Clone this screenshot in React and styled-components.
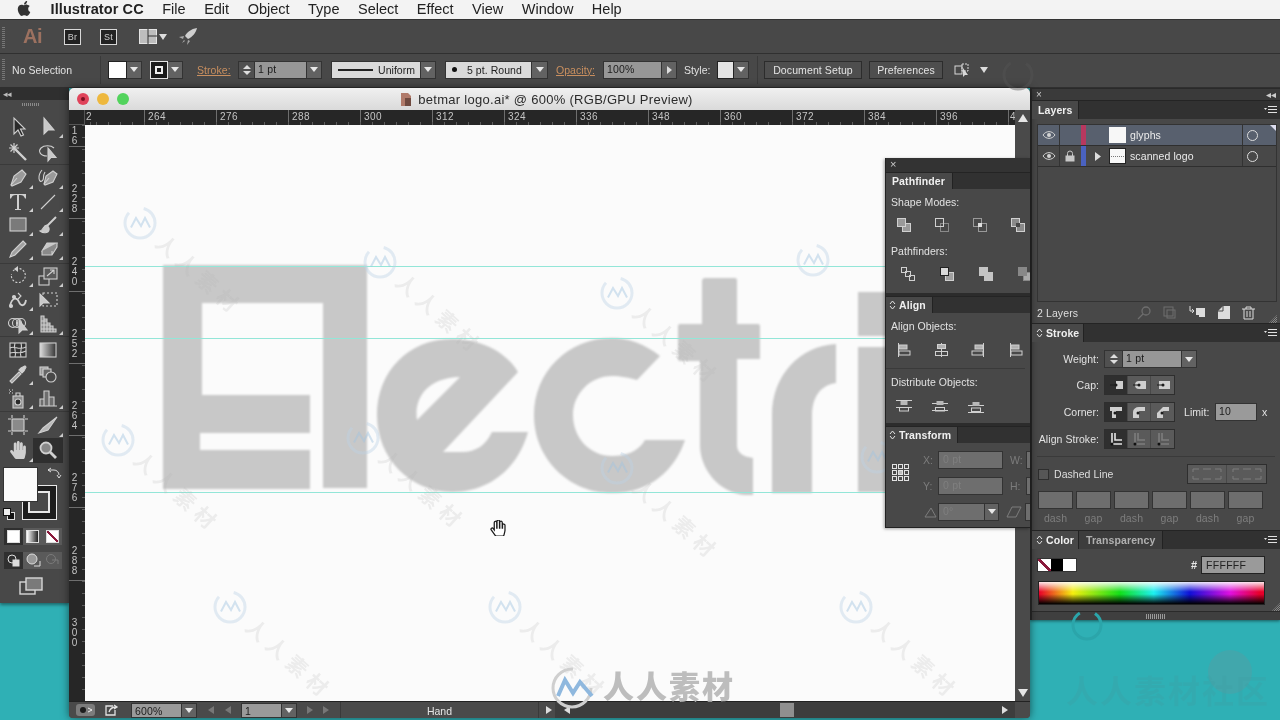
import React from "react";
import styled, { createGlobalStyle } from "styled-components";
import { FaApple, FaHandPaper } from "react-icons/fa";

const UI = `"Liberation Sans", Arial, sans-serif`;
const PANEL = "#484848";

const Global = createGlobalStyle`
  html, body { margin: 0; padding: 0; background: #2fb0b5; overflow: hidden; }
  * { box-sizing: border-box; }
`;

const Screen = styled.div`
  position: relative; width: 1280px; height: 720px; overflow: hidden;
  display: flex; flex-direction: column; background: #2fb0b5;
  font-family: ${UI}; color: #dcdcdc; filter: blur(.3px);
`;

/* ---------- menu bar ---------- */
const MenuBar = styled.div`
  height: 20px; flex: none; display: flex; align-items: center; gap: 18.5px;
  background: #f3f3f3; border-bottom: 1px solid #333; padding-left: 16px;
  color: #222; font-size: 14.5px; line-height: 19px;
`;
const Apple = styled(FaApple)` width: 16px; height: 17px; color: #333; margin: -2px 0 0 0; `;
const AppName = styled.b` letter-spacing: .1px; `;
const MenuItem = styled.span``;

/* ---------- app bar ---------- */
const AppBar = styled.div`
  height: 34px; flex: none; display: flex; align-items: center; position: relative;
  background: #484848; border-bottom: 1px solid #303030; padding-left: 23px;
`;
const Grip = styled.div`
  position: absolute; left: 2px; top: ${p => p.$top}px; width: 3px; height: ${p => p.$h}px;
  background: repeating-linear-gradient(to bottom, #777 0 1px, transparent 1px 2px);
`;
const AiLogo = styled.span` font-size: 20px; font-weight: bold; color: #9c7160; width: 41px; letter-spacing: -.5px; `;
const BadgeBox = styled.span`
  width: 17px; height: 16px; margin-right: ${p => p.$mr}px; border: 1px solid #d8d8d8; background: #222;
  display: flex; align-items: center; justify-content: center; font-size: 9px; color: #ccc; letter-spacing: .3px;
`;
const IconSlot = styled.span`
  display: inline-flex; align-items: center; margin-left: ${p => p.$ml || 0}px; flex: none;
`;

/* ---------- control bar ---------- */
const ControlBar = styled.div`
  height: 34px; flex: none; display: flex; align-items: center; position: relative; padding-bottom: 2px;
  background: #484848; border-bottom: 1px solid #303030; padding-left: 12px; font-size: 10.5px;
`;
const CtrlText = styled.span`
  margin-left: ${p => p.$ml || 0}px; width: ${p => p.$w}px; flex: none; letter-spacing: .05px; white-space: nowrap;
  color: #e2e2e2; font-size: 10.5px;
`;
const LinkLabel = styled(CtrlText)` color: #c98f5f; text-decoration: underline; `;
const VSep = styled.span` width: 1px; height: 28px; background: #3a3a3a; flex: none; margin-left: ${p => p.$ml}px; `;
const Cluster = styled.div` display: flex; height: 18px; flex: none; margin-left: ${p => p.$ml || 0}px; `;
const Swatch = styled.span`
  width: ${p => p.$w}px; height: 100%; flex: none; background: ${p => p.$bg || "#fff"};
  border: 1px solid ${p => p.$line || "#222"}; display: flex; align-items: center; justify-content: center;
`;
const Drop = styled.span`
  width: ${p => p.$w || 15}px; height: 100%; flex: none; background: #626262; border: 1px solid #333; border-left: 0;
  display: flex; align-items: center; justify-content: center;
  &::after { content: ""; border-left: 4px solid transparent; border-right: 4px solid transparent; border-top: 5px solid #e8e8e8; }
`;
const PlayDrop = styled(Drop)`
  &::after { border: 0; border-top: 4px solid transparent; border-bottom: 4px solid transparent; border-left: 5px solid #ddd; }
`;
const Stepper = styled.span`
  width: ${p => p.$w || 16}px; height: 100%; flex: none; background: #505050; border: 1px solid #333; border-right: 0;
  display: flex; flex-direction: column; align-items: center; justify-content: center; gap: 2px;
  &::before { content: ""; border-left: 4px solid transparent; border-right: 4px solid transparent; border-bottom: 4px solid #ddd; }
  &::after { content: ""; border-left: 4px solid transparent; border-right: 4px solid transparent; border-top: 4px solid #ddd; }
`;
const NumInput = styled.span`
  width: ${p => p.$w}px; height: 100%; flex: none; background: ${p => p.$bg || "#979797"}; color: ${p => p.$fg || "#1c1c1c"};
  border: 1px solid #333; font-size: 10.5px; line-height: 15px; padding-left: 3px; letter-spacing: .2px; white-space: nowrap;
`;
const LightBox = styled.span`
  width: ${p => p.$w}px; height: 100%; flex: none; background: #dadada; color: #222; border: 1px solid #333;
  display: flex; align-items: center; gap: 5px; padding: 0 5px 0 6px; font-size: 10.5px; letter-spacing: .05px; white-space: nowrap;
`;
const StrokeLine = styled.span` width: 35px; height: 2px; background: #222; flex: none; `;
const Dot = styled.span` width: 5px; height: 5px; border-radius: 50%; background: #111; margin-right: 5px; flex: none; `;
const FlatButton = styled.span`
  width: ${p => p.$w}px; height: 18px; flex: none; margin-left: ${p => p.$ml}px; background: #4e4e4e; border: 1px solid #2c2c2c;
  display: flex; align-items: center; justify-content: center; font-size: 10.5px; letter-spacing: .1px; color: #e4e4e4; white-space: nowrap;
`;

/* ---------- workspace ---------- */
const Workspace = styled.div` flex: 1; display: flex; align-items: flex-start; min-height: 0; `;

const ToolsPanel = styled.div`
  width: 69px; height: 515px; flex: none; background: #484848; display: flex; flex-direction: column;
  box-shadow: 0 2px 3px rgba(0,0,0,.4); position: relative;
`;
const ToolsHead = styled.div`
  height: 12px; background: #2f2f2f; display: flex; align-items: center; padding-left: 3px;
  font-size: 9px; color: #bbb; line-height: 10px; letter-spacing: -1px;
`;
const ToolsGrip = styled.div`
  height: 3px; width: 18px; margin: 3px auto 0 22px;
  background: repeating-linear-gradient(to right, #8a8a8a 0 1px, transparent 1px 2px);
`;
const ToolGroup = styled.div`
  display: grid; grid-template-columns: 30px 30px; padding: 0 0 0 3px; grid-auto-rows: ${p => p.$row}px;
  padding-top: ${p => p.$pt || 0}px; padding-bottom: ${p => p.$pb ?? 0}px;
  border-bottom: 1px solid ${p => p.$last ? "transparent" : "#3a3a3a"};
`;
const Tool = styled.span`
  position: relative; display: flex; align-items: center; justify-content: center;
  background: ${p => p.$on ? "#2f2f2f" : "transparent"};
  &::after {
    content: ""; position: absolute; right: 0; bottom: 1px; display: ${p => p.$corner ? "block" : "none"};
    border-left: 4px solid transparent; border-bottom: 4px solid #cfcfcf;
  }
`;
const ColorBlock = styled.div` position: relative; height: 61px; margin-top: 3px; flex: none; `;
const FillBig = styled.span`
  position: absolute; left: 3px; top: 0; width: 35px; height: 35px; background: #fbfbfb; border: 1px solid #333; z-index: 2;
`;
const StrokeBig = styled.span`
  position: absolute; left: 22px; top: 18px; width: 35px; height: 35px; background: #1d1d1d; border: 1px solid #e8e8e8;
  display: flex; align-items: center; justify-content: center;
  &::after { content: ""; width: 18px; height: 18px; border: 2px solid #e8e8e8; background: #484848; margin: -1px 0 0 -1px;}
`;
const SwapIcon = styled.svg` position: absolute; left: 46px; top: 0; `;
const DefaultIcon = styled.svg` position: absolute; left: 3px; top: 41px; `;
const ModeRow = styled.div`
  display: flex; height: 17px; margin: ${p => p.$mt}px 0 0 4px; width: 58px; background: #5a5a5a; flex: none;
`;
const ModeCell = styled.span`
  flex: 1; display: flex; align-items: center; justify-content: center; background: ${p => p.$on ? "#2f2f2f" : "transparent"};
`;
const ModeSquare = styled.span`
  width: 13px; height: 13px; border: 1px solid #ddd; background: ${p => p.$bg};
`;
const ScreenMode = styled.span` display: flex; justify-content: center; margin: 8px 7px 0 0; `;

/* ---------- document window ---------- */
const DocWindow = styled.div`
  position: relative; width: 961px; height: 630px; flex: none; display: flex; flex-direction: column;
  border-radius: 5px 5px 4px 4px; box-shadow: 0 0 8px rgba(0,0,0,.55); background: #484848;
`;
const TitleBar = styled.div`
  height: 22px; flex: none; display: flex; align-items: center; position: relative; padding-left: 8px; gap: 8px;
  background: linear-gradient(#f0f0f0, #dadada); border-radius: 5px 5px 0 0; color: #2b2b2b; font-size: 13px;
`;
const Light = styled.span`
  width: 12px; height: 12px; border-radius: 50%; background: ${p => p.$c}; flex: none; display: flex; align-items: center; justify-content: center;
  &::after { content: ""; width: 4px; height: 4px; border-radius: 50%; background: ${p => p.$dot || "transparent"}; }
`;
const TitleText = styled.div`
  flex: 1; display: flex; justify-content: center; align-items: center; gap: 5px; padding-right: 75px; letter-spacing: .28px;
`;
const DocGrid = styled.div`
  flex: 1; min-height: 0; display: grid; grid-template-columns: 16px 930px 15px; grid-template-rows: 15px 576px;
`;
const Corner = styled.div` background: #262626; border-right: 1px solid #555; border-bottom: 1px solid #555; `;
const HRuler = styled.div`
  display: flex; background: #262626; overflow: hidden; position: relative; font-size: 10px; color: #c4c4c4; letter-spacing: .5px;
  &::after {
    content: ""; position: absolute; left: 0; right: 0; bottom: 0; height: 3px;
    background: repeating-linear-gradient(to right, #5c5c5c 0 1px, transparent 1px 12px); background-position: 11px 0;
  }
`;
const HCell = styled.span`
  width: ${p => p.$w || 72}px; flex: none; border-left: ${p => p.$first ? "0" : "1px solid #6e6e6e"}; padding-left: ${p => p.$pl ?? 3}px; line-height: 13px;
`;
const VRuler = styled.div`
  grid-column: 1; display: flex; flex-direction: column; background: #262626; overflow: hidden; position: relative; color: #c4c4c4; font-size: 10px;
  &::after {
    content: ""; position: absolute; top: 0; bottom: 0; right: 0; width: 3px;
    background: repeating-linear-gradient(to bottom, #5c5c5c 0 1px, transparent 1px 12px);
  }
`;
const VCell = styled.span`
  height: ${p => p.$h || 72.3}px; flex: none; border-top: ${p => p.$first ? "0" : "1px solid #6e6e6e"};
  display: flex; flex-direction: column; justify-content: flex-end; padding: 0 0 ${p => p.$first ? 0 : 4}px 2px;
`;
const VLabel = styled.span` width: 7px; word-break: break-all; line-height: 10px; text-align: center; `;
const VScroll = styled.div`
  grid-column: 3; grid-row: 1 / 3; background: #4a4a4a; display: flex; flex-direction: column; justify-content: space-between; align-items: center; padding: 4px 0 4px;
`;
const ArrowUp = styled.span` width: 0; height: 0; border-left: 5px solid transparent; border-right: 5px solid transparent; border-bottom: 8px solid #e6e6e6; `;
const ArrowDown = styled.span` width: 0; height: 0; border-left: 5px solid transparent; border-right: 5px solid transparent; border-top: 8px solid #e6e6e6; `;
const Canvas = styled.div` background: #fbfbfb; overflow: hidden; position: relative; `;
const CanvasArt = styled.svg` display: block; `;
const HandCursor = styled.span` position: absolute; left: 405px; top: 395px; line-height: 0; `;

const StatusBar = styled.div`
  height: 17px; flex: none; display: flex; align-items: center; background: #4a4a4a; border-top: 1px solid #222; border-radius: 0 0 4px 4px;
  font-size: 10.5px; color: #e4e4e4; position: relative;
`;
const StatusCluster = styled.div` display: flex; height: 15px; margin-left: ${p => p.$ml || 0}px; flex: none; `;
const StatusMsg = styled.span`
  width: 199px; height: 100%; flex: none; margin-left: ${p => p.$ml}px; border-left: 1px solid #3a3a3a; border-right: 1px solid #3a3a3a;
  display: flex; align-items: center; justify-content: center; padding-top: 1px;
`;
const GearBtn = styled.span`
  width: 19px; height: 12px; margin-left: 7px; background: #7c7c7c; border-radius: 3px; flex: none; display: flex; align-items: center; justify-content: center;
`;
const Nav = styled.span`
  margin-left: ${p => p.$ml}px; flex: none; width: 0; height: 0; position: relative; z-index: 1;
  border-top: 4px solid transparent; border-bottom: 4px solid transparent;
  ${p => p.$dir === "l" ? `border-right: 6px solid ${p.$c || "#777"};` : `border-left: 6px solid ${p.$c || "#777"};`}
`;
const ScrollTrack = styled.div`
  position: absolute; left: 486px; width: 460px; top: 0; bottom: 0; background: #3d3d3d;
`;
const ScrollThumb = styled.span`
  position: absolute; left: 711px; width: 14px; top: 1px; bottom: 1px; background: #8f8f8f;
`;

/* ---------- floating pathfinder ---------- */
const Floating = styled.div`
  position: absolute; left: 816px; top: 70px; width: 145px; height: 370px; background: ${PANEL}; overflow: hidden;
  border-left: 1px solid #222; border-bottom: 1px solid #222; box-shadow: -1px 1px 3px rgba(0,0,0,.35); font-size: 10.5px; z-index: 3;
  display: flex; flex-direction: column;
`;
const FloatHead = styled.div`
  height: 14px; flex: none; background: #333; color: #ccc; font-size: 11px; line-height: 13px; padding-left: 4px;
`;
const TabRow = styled.div`
  height: ${p => p.$h || 18}px; flex: none; display: flex; background: #313131; border-top: 1px solid #242424; position: relative;
`;
const Tab = styled.span`
  width: ${p => p.$w}px; height: 100%; flex: none; display: flex; align-items: center; padding-left: ${p => p.$pl ?? 6}px; gap: 3px;
  background: ${p => p.$dim ? "#3d3d3d" : PANEL}; color: ${p => p.$dim ? "#b0b0b0" : "#f0f0f0"}; font-weight: bold; font-size: 10.5px; letter-spacing: .1px;
  border-right: 1px solid #222; white-space: nowrap;
`;
const Diamond = styled.svg` flex: none; `;
const SectionBody = styled.div`
  height: ${p => p.$h}px; flex: none; padding: ${p => p.$pt || 0}px 0 0 5px; overflow: hidden;
`;
const SectionLabel = styled.div`
  height: 14px; line-height: 14px; letter-spacing: .05px; color: #e2e2e2; margin-top: ${p => p.$mt || 0}px; font-size: 10.5px;
`;
const IconRow = styled.div`
  display: flex; margin: ${p => p.$mt}px 0 0 ${p => p.$ml || 0}px; height: 16px; width: 200px;
`;
const IconCell = styled.span` width: ${p => p.$w}px; flex: none; display: flex; justify-content: center; `;
const SectionRule = styled.div` height: 1px; background: #3a3a3a; margin: 10px 5px 0 -5px; `;
const SectionGap = styled.div` height: 3px; flex: none; background: #2c2c2c; `;
const TransformWrap = styled.div` display: flex; padding: 8px 0 0 5px; height: 84px; `;
const RefGrid = styled.svg` margin-top: 12px; flex: none; `;
const TransformRows = styled.div` display: flex; flex-direction: column; gap: 8.5px; margin-left: 13px; `;
const TransformRow = styled.div` display: flex; height: 17.5px; align-items: center; `;
const DimLabel = styled.span` width: ${p => p.$w}px; flex: none; color: #7c7c7c; font-size: 10.5px; margin-left: ${p => p.$ml || 0}px; `;
const DimInput = styled.span`
  width: ${p => p.$w}px; height: 100%; flex: none; background: #6e6e6e; border: 1px solid #333; color: #7f7f7f; line-height: 15px;
  padding-left: 4px; margin-left: ${p => p.$ml || 0}px; letter-spacing: .2px; overflow: hidden;
`;

/* ---------- dock ---------- */
const Dock = styled.div`
  width: 250px; height: 532px; flex: none; display: flex; flex-direction: column; background: ${PANEL};
  border-left: 2px solid #2a2a2a; box-shadow: 0 1px 3px rgba(0,0,0,.5); font-size: 10.5px;
`;
const DockHead = styled.div`
  height: 12px; flex: none; background: #3a3a3a; display: flex; align-items: center; justify-content: space-between; padding: 0 4px 0 4px;
  font-size: 10px; color: #ccc; line-height: 10px; border-top: 1px solid #2a2a2a;
`;
const MenuGlyph = styled.svg` position: absolute; right: 3px; top: 4px; `;
const LayersBody = styled.div` height: 204px; flex: none; padding: 5px 3px 0 5px; display: flex; flex-direction: column; position: relative; `;
const LayersList = styled.div` height: 178px; border: 1px solid #333; flex: none; `;
const LayerRow = styled.div`
  height: 21px; display: grid; grid-template-columns: 22px 20px 7px 22px 17px 1fr 34px; align-items: center; position: relative;
  background: ${p => p.$on ? "#58606e" : "transparent"}; border-bottom: 1px solid #2f2f2f;
`;
const LayerCell = styled.span`
  height: 100%; display: flex; align-items: center; justify-content: center;
  border-right: ${p => p.$line ? "1px solid #333" : "0"};
`;
const LayerBar = styled.span` width: 5px; height: 100%; background: ${p => p.$c}; justify-self: center; `;
const Thumb = styled.span`
  width: 17px; height: 16px; background: #f7f7f7; border: 1px solid ${p => p.$line || "#f7f7f7"}; position: relative; display: block;
  &::after { content: ""; display: ${p => p.$scan ? "block" : "none"}; position: absolute; left: 1px; right: 1px; top: 7px; height: 0; border-top: 1px dotted #777; }
`;
const LayerName = styled.span` padding-left: 4px; color: #ececec; letter-spacing: .1px; `;
const TargetCell = styled.span`
  height: 100%; border-left: 1px solid #333; display: flex; align-items: center; justify-content: flex-start; padding-left: 4px;
  &::after { content: ""; width: 9px; height: 9px; border: 1px solid #ddd; border-radius: 50%; }
`;
const SelCorner = styled.span`
  position: absolute; right: 0; top: 0; border-left: 6px solid transparent; border-top: 6px solid #dde;
`;
const LayersFoot = styled.div` flex: 1; display: flex; align-items: center; position: relative; letter-spacing: .1px; color: #dedede; `;
const FootIcons = styled.div`
  position: absolute; left: 100px; top: 3px; display: flex; gap: 10px; 
`;
const GripCorner = styled.span`
  position: absolute; right: 0; bottom: 0; width: 8px; height: 8px;
  background: repeating-conic-gradient(#888 0 25%, transparent 0 50%) 0 0 / 2px 2px;
  clip-path: polygon(100% 0, 100% 100%, 0 100%);
`;
const StrokeBody = styled.div` height: 188px; flex: none; padding-top: 8px; display: flex; flex-direction: column; `;
const StrokeRow = styled.div`
  display: flex; height: ${p => p.$h || 20}px; align-items: center; margin-bottom: 7px; flex: none;
`;
const StrokeLabel = styled.span` width: 67px; text-align: right; flex: none; margin-right: 5px; color: #e2e2e2; letter-spacing: .05px; white-space: nowrap; `;
const Seg = styled.div` display: flex; height: 20px; border: 1px solid #2e2e2e; flex: none; `;
const SegCell = styled.span`
  width: ${p => p.$w || 23}px; flex: none; display: flex; align-items: center; justify-content: center;
  background: ${p => p.$on ? "#2f2f2f" : "#5a5a5a"}; border-right: 1px solid #484848;
  &:last-child { border-right: 0; }
`;
const Divider = styled.div` height: 1px; background: #3a3a3a; margin: 0 5px 0 5px; flex: none; `;
const DashRow = styled.div` display: flex; align-items: center; height: 20px; margin: 7px 0 0 6px; flex: none; `;
const CheckBox = styled.span` width: 11px; height: 11px; background: #565656; border: 1px solid #2e2e2e; flex: none; margin-right: 5px; `;
const DashLabel = styled.span` width: 133px; flex: none; letter-spacing: .05px; color: #dedede; `;
const DashGrid = styled.div`
  display: grid; grid-template-columns: repeat(6, 38px); margin: 7px 0 0 6px; row-gap: 3px; justify-items: start;
`;
const DashInput = styled.span` width: 35px; height: 18px; background: #6e6e6e; border: 1px solid #333; `;
const DashCaption = styled.span` width: 35px; text-align: center; color: #7e7e7e; font-size: 10.5px; letter-spacing: .1px; line-height: 13px; `;
const ColorBody = styled.div` height: 62px; flex: none; padding: 7px 15px 0 5px; position: relative; `;
const ColorTop = styled.div` display: flex; align-items: center; height: 18px; `;
const MiniSwatches = styled.div` display: flex; height: 14px; width: 40px; flex: none; border: 1px solid #333; `;
const MiniCell = styled.span` flex: 1; background: ${p => p.$bg}; `;
const Hash = styled.span` margin-left: 114px; width: 10px; color: #e8e8e8; font-size: 11px; font-weight: bold; flex: none; `;
const HexInput = styled.span`
  width: 64px; height: 18px; flex: none; background: #9a9a9a; border: 1px solid #222; color: #222; padding-left: 4px; line-height: 16px; letter-spacing: .3px;
`;
const Spectrum = styled.div`
  height: 24px; margin: 7px 0 0 1px; border: 1px solid #222;
  background:
    linear-gradient(to bottom, rgba(255,255,255,.9) 0%, rgba(255,255,255,0) 45%, rgba(0,0,0,0) 55%, #000 100%),
    linear-gradient(to right, #e8002a 0%, #f5ee10 15%, #12e01a 36%, #1ef0f0 51%, #1010d8 67%, #e010e0 85%, #e8002a 98%);
`;
const DockFoot = styled.div`
  height: 9px; flex: none; background: #3f3f3f; border-top: 1px solid #2a2a2a; display: flex; justify-content: center; align-items: center;
  &::after { content: ""; width: 20px; height: 5px; background: repeating-linear-gradient(to right, #999 0 1px, transparent 1px 2px); }
`;

/* ---------- overlay watermark ---------- */
const Overlay = styled.svg` position: absolute; left: 0; top: 0; pointer-events: none; z-index: 10; `;
const CJK = `"Noto Sans CJK SC", sans-serif`;

/* ---------- icons ---------- */
const S = "#d0d0d0";
const I = ({ children, s = 22 }) => <svg width={s} height={s} viewBox="0 0 22 22" fill="none" stroke={S} strokeWidth="1.1">{children}</svg>;
const tools = {
  select: <I><path d="M7 2v16l4-4 3 6 2.500-1-3-6H18Z" fill="#2a2a2a" /></I>,
  direct: <I><path d="M7 2v16l4-4h6Z" fill="#c8c8c8" /></I>,
  wand: <I><path d="M8 8l11 11" strokeWidth="2.400" /><path d="M7 2v10M2 7h10M3.500 3.500l7 7M10.500 3.500l-7 7" strokeWidth="1.200" /></I>,
  lasso: <I><path d="M10 15C3 15 1 10 4 7c3-3 10-3 13 0" /><path d="M11 7v13l3-3.500h5Z" fill="#c8c8c8" /></I>,
  pen: <I><path d="M15 3l4 4-5 8-9 4-1-1 3-9Z" fill="#9a9a9a" /><path d="M4 18l6-7" /></I>,
  curv: <I><path d="M16 4l4 3-4 8-8 3-1-1 2-8Z" fill="#9a9a9a" /><path d="M7 17l5-6M5 3C0 9 2 16 5 14s0-4 3-9" /></I>,
  type: <I><path d="M3 3h16v4.500h-1C17 5 16 4 13 4h-1v14h2v1H8v-1h2V4H9C6 4 5 5 4 7.500H3Z" fill="#d0d0d0" stroke="none" /></I>,
  line: <I><path d="M4 18L18 4" /></I>,
  rect: <I><rect x="3" y="4" width="16" height="13" fill="#7a7a7a" /></I>,
  brush: <I><path d="M19 3L10 12" strokeWidth="2" /><path d="M10 11c-4 0-3 5-7 6 4 3 10 2 9-3Z" fill="#c8c8c8" /></I>,
  pencil: <I><path d="M16 3l3 3L8 17l-5 2 2-5Z" fill="#a0a0a0" /></I>,
  eraser: <I><path d="M10 5h10l-5 8H5Z" fill="#c8c8c8" /><path d="M5 13v4h10l5-8v-4M15 13v4" fill="#8a8a8a" /></I>,
  rotate: <I><path d="M6 6a7 7 0 1 1-1.500 3" strokeDasharray="2 1.600" /><path d="M11 1v6L7 4Z" fill="#d0d0d0" stroke="none" /></I>,
  scale: <I><rect x="2" y="11" width="10" height="9" /><rect x="7" y="3" width="13" height="11" fill="#5a5a5a" /><path d="M10 11l7-6M13 5h4v4" /></I>,
  width: <I><path d="M3 17C5 8 10 8 12 13s6 4 7-2" strokeWidth="1.800" /><circle cx="7" cy="8" r="1.500" fill="#d0d0d0" /><circle cx="4" cy="17" r="1.500" fill="#d0d0d0" /><path d="M11 4l3 3-3 3" /></I>,
  free: <I><rect x="6" y="4" width="14" height="13" strokeDasharray="2 2" /><path d="M3 5v12l3-3h6Z" fill="#c8c8c8" /></I>,
  builder: <I><circle cx="6" cy="10" r="4.500" /><circle cx="10" cy="10" r="4.500" /><circle cx="14" cy="10" r="4.500" /><path d="M12 7v13l3-3h5Z" fill="#c8c8c8" /></I>,
  persp: <I><path d="M4 3h3v16H4zM7 6h3v13H7zM10 10h3v9h-3zM13 13h3v6h-3zM16 16h3v3h-3zM4 8h6M4 12h9M4 16h15" fill="#8a8a8a" /></I>,
  mesh: <I><rect x="3" y="4" width="16" height="14" fill="#333" /><path d="M3 9c5-3 8 3 16-1M3 14c5-2 8 2 16-2M8 4c-2 5 2 9 0 14M14 4c2 5-2 9 0 14" /></I>,
  gradient: <I><defs><linearGradient id="gt"><stop offset="0" stopColor="#ddd" /><stop offset="1" stopColor="#333" /></linearGradient></defs><rect x="3" y="4" width="16" height="14" fill="url(#gt)" /></I>,
  dropper: <I><path d="M5 20l-2-2 9-9 2 2Z" fill="#a0a0a0" /><path d="M12 7l3 3 2-2 2-4-1-1-4 2Z" fill="#d0d0d0" /></I>,
  blend: <I><rect x="3" y="4" width="8" height="8" fill="#999" /><rect x="6" y="6" width="8" height="8" fill="#666" /><circle cx="14" cy="14" r="5" fill="#484848" /></I>,
  spray: <I><rect x="6" y="9" width="10" height="12" fill="#8a8a8a" /><path d="M9 9V6h4v3" /><circle cx="11" cy="15" r="3" fill="#2a2a2a" /><path d="M2 3h1M5 3h1M2 6h1M5 6h1M3 4.500h1" /></I>,
  graph: <I><path d="M3 19V12h4v7M7 19V4h5v15M12 19v-9h5v9M2 19h18" fill="#6e6e6e" /></I>,
  artboard: <I><rect x="5" y="5" width="12" height="12" fill="#8a8a8a" /><path d="M5 1v3M17 1v3M5 18v3M17 18v3M1 5h3M1 17h3M18 5h3M18 17h3" /></I>,
  slice: <I><path d="M20 3L6 14l-4 5 9-3Z" fill="#b8b8b8" /></I>,
  zoom: <I><circle cx="9" cy="9" r="5.500" fill="#888" strokeWidth="1.800" /><path d="M13 13l6 6" strokeWidth="2.800" /></I>
};

const Sq = ({ aFill = "none", bFill = "none", aLine = S, bLine = S, extra }) => (
  <svg width="16" height="16" viewBox="0 0 16 16" fill="none" strokeWidth="1">
    <rect x="6.500" y="6.500" width="8" height="8" stroke={bLine} fill={bFill} />
    <rect x="1.500" y="1.500" width="8" height="8" stroke={aLine} fill={aFill} />
    {extra}
  </svg>
);
const Align = ({ v }) => (
  <svg width="16" height="16" viewBox="0 0 16 16" stroke={S} fill="#b0b0b0">
    {v === "l" && <><path d="M2.500 1v14" /><rect x="3" y="3" width="8" height="4" /><rect x="3" y="9" width="11" height="4" fill="none" /></>}
    {v === "c" && <><path d="M8.500 1v14" /><rect x="4.500" y="2.500" width="8" height="4" /><rect x="2.500" y="9.500" width="12" height="4" fill="none" /></>}
    {v === "r" && <><path d="M13.500 1v14" /><rect x="5" y="3" width="8" height="4" /><rect x="2" y="9" width="11" height="4" fill="none" /></>}
  </svg>
);
const Dist = ({ v }) => {
  const y = v === 0 ? [3, 9] : v === 1 ? [6, 12] : [8, 14];
  return (
    <svg width="18" height="16" viewBox="0 0 18 16" stroke={S}>
      <path d={`M1 ${y[0] - 0.5}h16M1 ${y[1] + 0.5}h16`} />
      <rect x="5.500" y={v === 2 ? 4 : 3} width="7" height="4" fill="#b8b8b8" stroke="none" />
      <rect x="4.500" y={v === 2 ? 10 : 9.5} width="9" height="3.500" fill="none" />
    </svg>
  );
};
const Eye = () => (
  <svg width="14" height="10" viewBox="0 0 14 10" fill="none" stroke="#d4d4d4">
    <path d="M1 5c3-4.500 9-4.500 12 0-3 4.500-9 4.500-12 0Z" /><circle cx="7" cy="5" r="2" fill="#d4d4d4" stroke="none" />
  </svg>
);
const Lock = () => (
  <svg width="10" height="12" viewBox="0 0 10 12" fill="none" stroke="#c8c8c8"><path d="M2.500 6V3.500a2.500 2.500 0 0 1 5 0V6" /><rect x="1" y="6" width="8" height="5" fill="#c8c8c8" /></svg>
);
const Menu = () => (
  <MenuGlyph width="13" height="9" viewBox="0 0 13 9" stroke="#e2e2e2">
    <path d="M4 1.500h9M4 4.500h9M4 7.500h9" /><path d="M0 3h3L1.500 5Z" fill="#e2e2e2" stroke="none" />
  </MenuGlyph>
);
const Dia = () => (
  <Diamond width="7" height="10" viewBox="0 0 7 10" fill="none" stroke="#e4e4e4"><path d="M1 4l2.500-3L6 4M1 6l2.500 3L6 6" /></Diamond>
);

const Cap = ({ v }) => (
  <svg width="14" height="14" viewBox="0 0 14 14">
    <path d={v === 0 ? "M7 3h7v8H7Z" : v === 1 ? "M14 3H7a4 4 0 0 0 0 8h7Z" : "M14 3H3v8h11Z"} fill="#cfcfcf" />
    <path d="M1 7h7" stroke="#1c1c1c" /><circle cx="7" cy="7" r="1.500" fill="#1c1c1c" />
  </svg>
);
const Join = ({ v }) => (
  <svg width="14" height="14" viewBox="0 0 14 14">
    <path d={v === 0 ? "M1 2h12v4H7v7H3V6H1Z" : v === 1 ? "M1 13V7a6 5 0 0 1 6-5h6v4H7v7Z" : "M1 13V8l6-6h6v4H7v7Z"} fill="#cfcfcf" />
    <circle cx="6" cy="8" r="1.500" fill="#1c1c1c" />
  </svg>
);
const AlignStroke = ({ v }) => (
  <svg width="14" height="14" viewBox="0 0 14 14" fill="none" stroke={v === 0 ? "#e4e4e4" : "#7d7d7d"} strokeWidth="1.600">
    <path d="M3 1v11h10" /><path d="M6 1v7h7" /><circle cx="3" cy="12" r="1.500" fill="#111" stroke="none" />
  </svg>
);
const DashIcon = () => (
  <svg width="30" height="12" viewBox="0 0 30 12" fill="none" stroke="#7d7d7d"><path d="M1 4V1h6M11 1h8M23 1h6v3M1 8v3h6M11 11h8M23 11h6V8" /></svg>
);

const Mark = ({ x, y, noText }) => (
  <g transform={`translate(${x} ${y})`}>
    <circle r="15" fill="none" stroke="#bcd3e6" strokeOpacity=".4" strokeWidth="3" strokeDasharray="58 16" />
    <path d="M-9 4.500L-4 -5L1 3L5 -5L10 4.500" fill="none" stroke="#9fc4e0" strokeOpacity=".45" strokeWidth="2" />
    {!noText && (
      <text transform="rotate(42) translate(25 7)" fontFamily={CJK} fontSize="21" letterSpacing="6" fill="#b5b5b5" fillOpacity=".2" fontWeight="700">人人素材</text>
    )}
  </g>
);

const Art = () => (
  <CanvasArt width="930" height="576" viewBox="85 125 930 576">
    <defs><filter id="soft"><feGaussianBlur stdDeviation="0.8" /></filter></defs>
    <g fill="#c8c8c8" fillRule="evenodd" filter="url(#soft)">
      <path d="M163 265H367V488H323V303H202V395H310V433H200V450H310V489H163Z" />
      <path d="M518 372C505 350 478 339 452 339C408 339 377 372 377 415C377 458 410 492 452 492C490 492 518 468 528 432H492C486 445 476 452 462 452H443ZM417 420C414 400 425 378 460 377Z" />
      <path d="M660 356C645 344 628 338 612 338C568 338 534 372 534 415C534 460 570 493 612 493C650 493 675 470 685 440H645C638 452 626 456 612 456C590 456 573 438 573 415C573 394 590 376 612 376C620 376 630 378 637 380Z" />
      <path d="M704 278H735Q737 278 737 280V324H758Q760 324 760 326V359H737V445Q737 456 753 458V495H745C720 493 700 470 700 445V361H680Q678 361 678 359V326Q678 324 680 324H702V280Z" />
      <path d="M836 344V383C820 385 812 398 812 415V493H772V415C772 375 800 346 836 344Z" />
      <rect x="858" y="292" width="44" height="44" /><rect x="858" y="347" width="44" height="145" />
    </g>
    <path d="M85 266.500H885M85 338.500H885M85 492.500H885" stroke="#93e6d8" strokeWidth="1" />
    {[[140, 223], [380, 262], [617, 293], [118, 440], [363, 438], [617, 468], [230, 607], [505, 607], [856, 607]].map(([x, y]) => <Mark key={x + "" + y} x={x} y={y} />)}
    <Mark x={813} y={260} noText /><Mark x={877} y={457} noText />
  </CanvasArt>
);

const hLabels = ["264", "276", "288", "300", "312", "324", "336", "348", "360", "372", "384", "396"];
const vLabels = ["228", "240", "252", "264", "276", "288", "300"];

export default function App() {
  return (
    <Screen>
      <Global />
      <MenuBar>
        <Apple />
        <AppName>Illustrator CC</AppName>
        {["File", "Edit", "Object", "Type", "Select", "Effect", "View", "Window", "Help"].map(m => <MenuItem key={m}>{m}</MenuItem>)}
      </MenuBar>

      <AppBar>
        <Grip $top={7} $h={22} />
        <AiLogo>Ai</AiLogo>
        <BadgeBox $mr={19}>Br</BadgeBox>
        <BadgeBox $mr={22}>St</BadgeBox>
        <svg width="18" height="15" viewBox="0 0 18 15"><rect x=".5" y=".5" width="17" height="14" fill="#bdbdbd" stroke="#e4e4e4" /><path d="M9 0v15M9 7h9" stroke="#333" /></svg>
        <IconSlot $ml={2}><svg width="8" height="6"><path d="M0 0h8L4 6Z" fill="#ddd" /></svg></IconSlot>
        <IconSlot $ml={11}>
          <svg width="20" height="20" viewBox="0 0 20 20"><path d="M19 1C13 2 9 5 7 9l3 3c4-2 8-6 9-11Z" fill="#cfcfcf" /><path d="M6 9L1 10l4 2ZM10 13l-1 5 3-4ZM6 13l-2 3 3-2Z" fill="#aaa" /></svg>
        </IconSlot>
      </AppBar>

      <ControlBar>
        <Grip $top={5} $h={22} />
        <CtrlText $w={60}>No Selection</CtrlText>
        <VSep $ml={28} />
        <Cluster $ml={7}><Swatch $w={19} /><Drop /></Cluster>
        <Cluster $ml={8}>
          <Swatch $w={18} $bg="#1a1a1a" $line="#e4e4e4"><svg width="8" height="8"><rect x="1" y="1" width="6" height="6" fill="none" stroke="#eee" strokeWidth="2" /></svg></Swatch>
          <Drop />
        </Cluster>
        <LinkLabel $ml={14} $w={41}>Stroke:</LinkLabel>
        <Cluster><Stepper /><NumInput $w={53}>1 pt</NumInput><Drop /></Cluster>
        <Cluster $ml={9}><LightBox $w={90}><StrokeLine />Uniform</LightBox><Drop /></Cluster>
        <Cluster $ml={9}><LightBox $w={87}><Dot />5 pt. Round</LightBox><Drop $w={16} /></Cluster>
        <LinkLabel $ml={8} $w={47}>Opacity:</LinkLabel>
        <Cluster><NumInput $w={59}>100%</NumInput><PlayDrop /></Cluster>
        <CtrlText $ml={7} $w={33}>Style:</CtrlText>
        <Cluster><Swatch $w={17} $bg="#e4e4e4" /><Drop /></Cluster>
        <VSep $ml={8} />
        <FlatButton $ml={6} $w={98}>Document Setup</FlatButton>
        <FlatButton $ml={7} $w={74}>Preferences</FlatButton>
        <IconSlot $ml={11}>
          <svg width="16" height="14" viewBox="0 0 16 14" fill="none" stroke="#d8d8d8"><rect x="1" y="3" width="7" height="8" /><rect x="8" y="1" width="6" height="7" strokeDasharray="2 1" /><path d="M9 5v9l2-2 3 0Z" fill="#d8d8d8" stroke="none" /></svg>
        </IconSlot>
        <IconSlot $ml={10}><svg width="8" height="6"><path d="M0 0h8L4 6Z" fill="#ddd" /></svg></IconSlot>
      </ControlBar>

      <Workspace>
        <ToolsPanel>
          <ToolsHead>◂◂</ToolsHead>
          <ToolsGrip />
          <ToolGroup $pt={8} $row={25}>
            <Tool>{tools.select}</Tool><Tool $corner>{tools.direct}</Tool>
            <Tool>{tools.wand}</Tool><Tool>{tools.lasso}</Tool>
          </ToolGroup>
          <ToolGroup $pt={1} $pb={2} $row={23.7}>
            <Tool $corner>{tools.pen}</Tool><Tool $corner>{tools.curv}</Tool>
            <Tool $corner>{tools.type}</Tool><Tool $corner>{tools.line}</Tool>
            <Tool $corner>{tools.rect}</Tool><Tool $corner>{tools.brush}</Tool>
            <Tool $corner>{tools.pencil}</Tool><Tool $corner>{tools.eraser}</Tool>
          </ToolGroup>
          <ToolGroup $row={24}>
            <Tool $corner>{tools.rotate}</Tool><Tool $corner>{tools.scale}</Tool>
            <Tool $corner>{tools.width}</Tool><Tool>{tools.free}</Tool>
            <Tool $corner>{tools.builder}</Tool><Tool $corner>{tools.persp}</Tool>
          </ToolGroup>
          <ToolGroup $pt={1} $pb={1} $row={24}>
            <Tool>{tools.mesh}</Tool><Tool>{tools.gradient}</Tool>
            <Tool $corner>{tools.dropper}</Tool><Tool>{tools.blend}</Tool>
            <Tool $corner>{tools.spray}</Tool><Tool $corner>{tools.graph}</Tool>
          </ToolGroup>
          <ToolGroup $pt={1} $row={25} $last>
            <Tool>{tools.artboard}</Tool><Tool $corner>{tools.slice}</Tool>
            <Tool $corner><FaHandPaper size={18} color="#cfcfcf" /></Tool><Tool $on>{tools.zoom}</Tool>
          </ToolGroup>
          <ColorBlock>
            <FillBig /><StrokeBig />
            <SwapIcon width="16" height="12" viewBox="0 0 16 12" fill="none" stroke="#ddd"><path d="M2 3h6a5 5 0 0 1 5 5M2 3l3-2M2 3l3 2M13 11l-2-3M13 11l2-3" /></SwapIcon>
            <DefaultIcon width="12" height="12" viewBox="0 0 12 12" fill="#111" stroke="#ddd"><rect x="4.500" y="4.500" width="7" height="7" /><rect x=".5" y=".5" width="7" height="7" fill="#eee" stroke="#111" /></DefaultIcon>
          </ColorBlock>
          <ModeRow $mt={0}>
            <ModeCell $on><ModeSquare $bg="#fff" /></ModeCell>
            <ModeCell><ModeSquare $bg="linear-gradient(to right,#fff,#222)" /></ModeCell>
            <ModeCell><ModeSquare $bg="linear-gradient(to top right,#fff 44%,#8b1a3c 44% 56%,#fff 56%)" /></ModeCell>
          </ModeRow>
          <ModeRow $mt={7}>
            <ModeCell $on><svg width="16" height="14" viewBox="0 0 16 14" fill="none" stroke="#ddd"><circle cx="6" cy="6" r="4" /><rect x="7" y="7" width="6" height="6" fill="#ddd" /></svg></ModeCell>
            <ModeCell><svg width="16" height="14" viewBox="0 0 16 14" fill="none" stroke="#ddd"><circle cx="7" cy="6" r="5" fill="#999" /><path d="M9 13h6V8" /></svg></ModeCell>
            <ModeCell><svg width="16" height="14" viewBox="0 0 16 14" fill="none" stroke="#7a7a7a"><circle cx="7" cy="6" r="4.500" /><path d="M8 7h6v4" /></svg></ModeCell>
          </ModeRow>
          <ScreenMode>
            <svg width="24" height="19" viewBox="0 0 24 19" fill="none" stroke="#d8d8d8"><rect x="1" y="5" width="15" height="12" fill="#484848" strokeWidth="1.400" /><rect x="7" y="1" width="16" height="12" fill="#7a7a7a" strokeWidth="1.400" /></svg>
          </ScreenMode>
        </ToolsPanel>

        <DocWindow>
          <TitleBar>
            <Light $c="#e0435a" $dot="#7b1022" />
            <Light $c="#eeb83e" />
            <Light $c="#52d35c" />
            <TitleText>
              <svg width="14" height="15" viewBox="0 0 14 15"><path d="M2 1h7l3 3v10H2Z" fill="#b07a6a" /><path d="M6 14V6h6v8Z" fill="#6f4a40" /></svg>
              betmar logo.ai* @ 600% (RGB/GPU Preview)
            </TitleText>
          </TitleBar>
          <DocGrid>
            <Corner />
            <HRuler>
              <HCell $first $pl={1} $w={59}>2</HCell>
              {hLabels.map(l => <HCell key={l}>{l}</HCell>)}
              <HCell $pl={1} $w={7}>4</HCell>
            </HRuler>
            <VScroll><ArrowUp /><ArrowDown /></VScroll>
            <VRuler>
              <VCell $first $h={21}><VLabel>16</VLabel></VCell>
              {vLabels.map(l => <VCell key={l}><VLabel>{l}</VLabel></VCell>)}
            </VRuler>
            <Canvas>
              <Art />
              <HandCursor><FaHandPaper size={16} color="#fff" stroke="#1a1a1a" strokeWidth="40" /></HandCursor>
            </Canvas>
          </DocGrid>
          <StatusBar>
            <GearBtn><svg width="14" height="8" viewBox="0 0 14 8"><circle cx="4" cy="4" r="3" fill="#1d1d1d" /><path d="M9 2l4 2-4 2" stroke="#eee" fill="none" /></svg></GearBtn>
            <IconSlot $ml={10}><svg width="14" height="12" viewBox="0 0 14 12" fill="none" stroke="#e2e2e2"><path d="M8 2H1v9h9V6" strokeWidth="1.300" /><path d="M4 8c1-3 4-5 7-5M9 1l3 2-3 2" strokeWidth="1.300" /></svg></IconSlot>
            <StatusCluster $ml={12}><NumInput $w={51} $bg="#9a9a9a">600%</NumInput><Drop $w={15} /></StatusCluster>
            <Nav $ml={11} $dir="l" />
            <Nav $ml={11} $dir="l" />
            <StatusCluster $ml={10}><NumInput $w={41} $bg="#9a9a9a">1</NumInput><Drop $w={15} /></StatusCluster>
            <Nav $ml={10} />
            <Nav $ml={10} />
            <StatusMsg $ml={11}>Hand</StatusMsg>
            <Nav $ml={7} $c="#ddd" />
            <ScrollTrack />
            <Nav $ml={12} $dir="l" $c="#ddd" />
            <ScrollThumb />
            <Nav $ml={432} $c="#ddd" />
          </StatusBar>

          <Floating>
            <FloatHead>×</FloatHead>
            <TabRow $h={17}><Tab $w={67}>Pathfinder</Tab></TabRow>
            <SectionBody $h={104} $pt={6}>
              <SectionLabel>Shape Modes:</SectionLabel>
              <IconRow $mt={8} $ml={-6}>
                <IconCell $w={38}><Sq aFill="#999" bFill="#999" /></IconCell>
                <IconCell $w={38}><Sq bLine="#8a8a8a" /></IconCell>
                <IconCell $w={38}><Sq aLine="#999" bLine="#999" extra={<rect x="6" y="6" width="4" height="4" fill="#ddd" />} /></IconCell>
                <IconCell $w={38}><Sq aFill="#8a8a8a" bFill="#8a8a8a" extra={<rect x="6" y="6" width="4" height="4" fill="#484848" />} /></IconCell>
              </IconRow>
              <SectionLabel $mt={11}>Pathfinders:</SectionLabel>
              <IconRow $mt={8} $ml={-3}>
                <IconCell $w={39}><svg width="16" height="16" viewBox="0 0 16 16" fill="none" stroke={S}><rect x="1.500" y="1.500" width="5" height="5" /><rect x="5.500" y="5.500" width="5" height="5" /><rect x="9.500" y="9.500" width="5" height="5" /></svg></IconCell>
                <IconCell $w={39}><Sq aFill="#d9d9d9" bFill="#a0a0a0" aLine="#222" /></IconCell>
                <IconCell $w={39}><Sq aFill="#c4c4c4" bFill="#c4c4c4" bLine="#c4c4c4" aLine="#c4c4c4" /></IconCell>
                <IconCell $w={39}><Sq aFill="#888" bFill="#aaa" bLine="#888" aLine="#888" /></IconCell>
              </IconRow>
            </SectionBody>
            <SectionGap />
            <TabRow $h={17}><Tab $w={47} $pl={3}><Dia />Align</Tab></TabRow>
            <SectionBody $h={110} $pt={6}>
              <SectionLabel>Align Objects:</SectionLabel>
              <IconRow $mt={9} $ml={-6}>
                <IconCell $w={38}><Align v="l" /></IconCell><IconCell $w={36}><Align v="c" /></IconCell><IconCell $w={38}><Align v="r" /></IconCell><IconCell $w={38}><Align v="l" /></IconCell>
              </IconRow>
              <SectionRule />
              <SectionLabel $mt={6}>Distribute Objects:</SectionLabel>
              <IconRow $mt={9} $ml={-5}>
                <IconCell $w={36}><Dist v={0} /></IconCell><IconCell $w={36}><Dist v={1} /></IconCell><IconCell $w={36}><Dist v={2} /></IconCell>
              </IconRow>
            </SectionBody>
            <SectionGap />
            <TabRow $h={17}><Tab $w={72} $pl={3}><Dia />Transform</Tab></TabRow>
            <TransformWrap>
              <RefGrid width="19" height="19" viewBox="0 0 19 19" fill="none" stroke="#e2e2e2">
                {[1, 7, 13].flatMap(y => [1, 7, 13].map(x => <rect key={x + "-" + y} x={x + .5} y={y + .5} width="4" height="4" fill={x === 7 && y === 7 ? "#bbb" : "none"} />))}
              </RefGrid>
              <TransformRows>
                <TransformRow><DimLabel $w={15}>X:</DimLabel><DimInput $w={65}>0 pt</DimInput><DimLabel $w={16} $ml={7}>W:</DimLabel><DimInput $w={40} /></TransformRow>
                <TransformRow><DimLabel $w={15}>Y:</DimLabel><DimInput $w={65}>0 pt</DimInput><DimLabel $w={16} $ml={7}>H:</DimLabel><DimInput $w={40} /></TransformRow>
                <TransformRow>
                  <svg width="15" height="12" viewBox="0 0 15 12" fill="none" stroke="#7c7c7c"><path d="M2 11h11L8 2Z" /></svg>
                  <DimInput $w={47}>0°</DimInput><Drop $w={14} />
                  <svg width="16" height="12" viewBox="0 0 16 12" fill="none" stroke="#7c7c7c" style={{ margin: "0 3px 0 7px", flex: "none" }}><path d="M1 11h9l5-10H6Z" /></svg>
                  <DimInput $w={40} />
                </TransformRow>
              </TransformRows>
            </TransformWrap>
          </Floating>
        </DocWindow>

        <Dock>
          <DockHead><span>×</span><span>◂◂</span></DockHead>
          <TabRow $h={19}><Tab $w={47}>Layers</Tab><Menu /></TabRow>
          <LayersBody>
            <LayersList>
              <LayerRow $on>
                <LayerCell $line><Eye /></LayerCell><LayerCell /><LayerBar $c="#b7385f" /><LayerCell />
                <Thumb /><LayerName>glyphs</LayerName><TargetCell /><SelCorner />
              </LayerRow>
              <LayerRow>
                <LayerCell $line><Eye /></LayerCell><LayerCell><Lock /></LayerCell><LayerBar $c="#4a62c0" />
                <LayerCell><svg width="6" height="9"><path d="M0 0l6 4.500L0 9Z" fill="#ddd" /></svg></LayerCell>
                <Thumb $scan $line="#222" /><LayerName>scanned logo</LayerName><TargetCell />
              </LayerRow>
            </LayersList>
            <LayersFoot>
              2 Layers
              <FootIcons>
                <svg width="15" height="15" viewBox="0 0 15 15" fill="none" stroke="#6e6e6e" strokeWidth="1.300"><circle cx="9" cy="6" r="4" /><path d="M6 9l-5 5" /></svg>
                <svg width="15" height="15" viewBox="0 0 15 15" fill="none" stroke="#6e6e6e"><rect x="2" y="2" width="9" height="9" /><rect x="5" y="5" width="8" height="8" /></svg>
                <svg width="17" height="15" viewBox="0 0 17 15" style={{ marginLeft: 2 }}><path d="M7 3h9v9h-6v-2H7Z" fill="#dcdcdc" /><path d="M1 1v5h4M3 4l2 2-2 2" stroke="#dcdcdc" fill="none" /></svg>
                <svg width="15" height="15" viewBox="0 0 15 15"><path d="M2 6l5-5h7v13H2Z" fill="#dcdcdc" /><path d="M2 6h5V1" stroke="#484848" fill="none" /></svg>
                <svg width="15" height="15" viewBox="0 0 15 15" fill="none" stroke="#dcdcdc"><path d="M1 4h13M5 4V2h5v2M3 4v10h9V4M6 6v6M9 6v6" /></svg>
              </FootIcons>
              <GripCorner />
            </LayersFoot>
          </LayersBody>

          <TabRow $h={19}><Tab $w={52} $pl={4}><Dia />Stroke</Tab><Menu /></TabRow>
          <StrokeBody>
            <StrokeRow $h={18}>
              <StrokeLabel>Weight:</StrokeLabel>
              <Cluster><Stepper $w={18} /><NumInput $w={60}>1 pt</NumInput><Drop /></Cluster>
            </StrokeRow>
            <StrokeRow>
              <StrokeLabel>Cap:</StrokeLabel>
              <Seg><SegCell $on><Cap v={0} /></SegCell><SegCell><Cap v={1} /></SegCell><SegCell><Cap v={2} /></SegCell></Seg>
            </StrokeRow>
            <StrokeRow>
              <StrokeLabel>Corner:</StrokeLabel>
              <Seg><SegCell $on><Join v={0} /></SegCell><SegCell><Join v={1} /></SegCell><SegCell><Join v={2} /></SegCell></Seg>
              <CtrlText $ml={9} $w={31}>Limit:</CtrlText>
              <Cluster><NumInput $w={42} $bg="#9a9a9a">10</NumInput></Cluster>
              <CtrlText $ml={5} $w={8}>x</CtrlText>
            </StrokeRow>
            <StrokeRow>
              <StrokeLabel>Align Stroke:</StrokeLabel>
              <Seg><SegCell $on><AlignStroke v={0} /></SegCell><SegCell><AlignStroke v={1} /></SegCell><SegCell><AlignStroke v={2} /></SegCell></Seg>
            </StrokeRow>
            <Divider />
            <DashRow>
              <CheckBox /><DashLabel>Dashed Line</DashLabel>
              <Seg><SegCell $w={39}><DashIcon /></SegCell><SegCell $w={39}><DashIcon /></SegCell></Seg>
            </DashRow>
            <DashGrid>
              {[0, 1, 2, 3, 4, 5].map(i => <DashInput key={i} />)}
              {["dash", "gap", "dash", "gap", "dash", "gap"].map((t, i) => <DashCaption key={i}>{t}</DashCaption>)}
            </DashGrid>
          </StrokeBody>

          <TabRow $h={19}>
            <Tab $w={47} $pl={4}><Dia />Color</Tab>
            <Tab $w={84} $pl={7} $dim>Transparency</Tab>
            <Menu />
          </TabRow>
          <ColorBody>
            <ColorTop>
              <MiniSwatches>
                <MiniCell $bg="linear-gradient(to top right,#fff 42%,#8b1a3c 42% 58%,#fff 58%)" /><MiniCell $bg="#000" /><MiniCell $bg="#fff" />
              </MiniSwatches>
              <Hash>#</Hash>
              <HexInput>FFFFFF</HexInput>
            </ColorTop>
            <Spectrum />
            <GripCorner />
          </ColorBody>
          <DockFoot />
        </Dock>
      </Workspace>

      <Overlay width="1280" height="720" viewBox="0 0 1280 720">
        <circle cx="1018" cy="75" r="14" fill="none" stroke="#555" strokeOpacity=".45" strokeWidth="3" strokeDasharray="58 16" />
        <circle cx="1087" cy="625" r="14" fill="none" stroke="#2ba5aa" strokeWidth="3" strokeDasharray="58 16" />
        <circle cx="1230" cy="672" r="22" fill="#5c9ba0" opacity=".4" />
        <text x="1066" y="703" fontFamily={CJK} fontSize="32" letterSpacing="2" fill="#3f9ea3" fontWeight="700" opacity=".3">人人素材社区</text>
        <g transform="translate(572 688)">
          <circle r="19" fill="none" stroke="#cfcfcf" strokeWidth="3" strokeDasharray="90 30" />
          <path d="M-14 8L-7 -8L1 5L8 -6L20 8" fill="none" stroke="#8fb8de" strokeWidth="4" />
        </g>
        <text x="603" y="698" fontFamily={CJK} fontSize="31" fontWeight="900" fill="#bdbdbd" letterSpacing="2">人人素材</text>
      </Overlay>
    </Screen>
  );
}
